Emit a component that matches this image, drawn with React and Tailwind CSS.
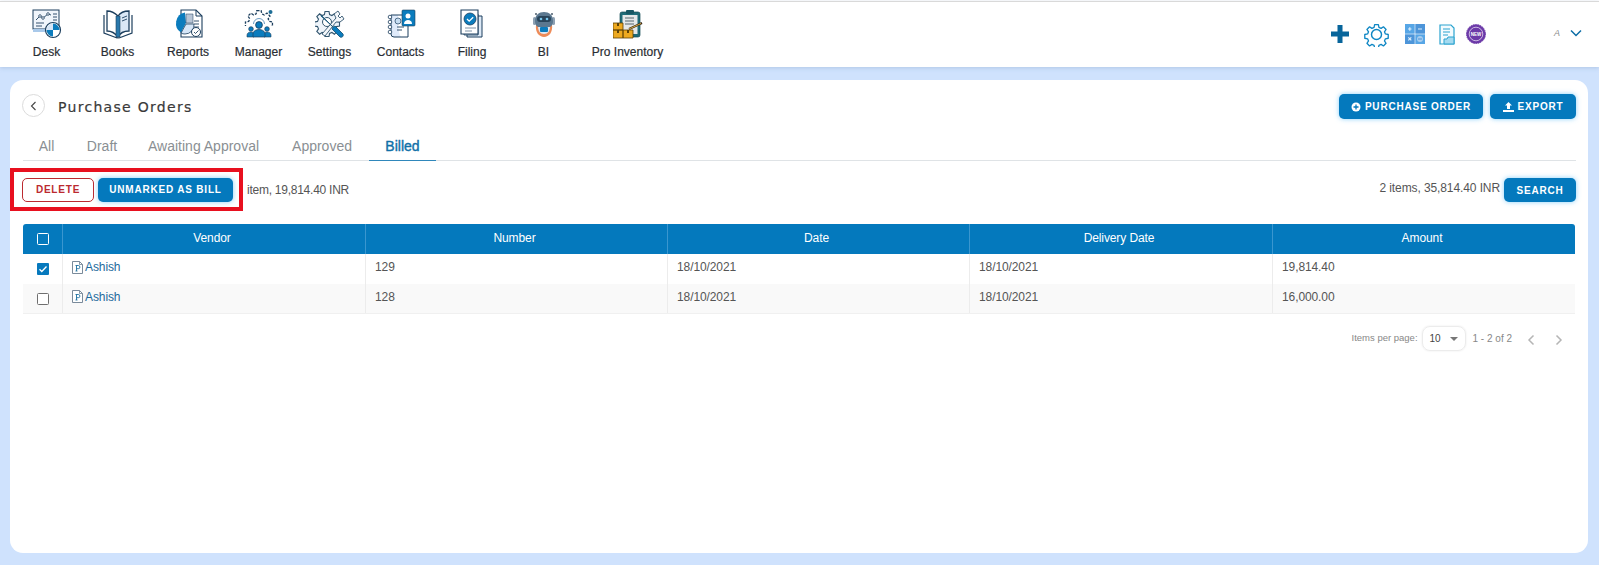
import React from "react";

const N = "#1d3f5e";
const B = "#0b7cbd";
const L = "#d6e6f7";
const GEAR =
  "M10 1.500h4l.6 3 2.300 1 2.500-1.700 2.800 2.800-1.700 2.500 1 2.300 3 .6v4l-3 .6-1 2.300 1.700 2.500-2.800 2.800-2.500-1.700-2.300 1-.6 3h-4l-.6-3-2.300-1-2.500 1.700-2.800-2.800 1.700-2.500-1-2.300-3-.6v-4l3-.6 1-2.300-1.700-2.500 2.800-2.800 2.500 1.700 2.300-1z";

function Desk() {
  return (
    <svg width="30" height="30" viewBox="0 0 30 30" fill="none">
      <rect x="1" y="1" width="26" height="19" fill="#f0f5fb" stroke={N} strokeWidth="1" />
      <path d="M1 20h16v3H1z" fill="#a9c9ea" />
      <path d="M4 11l4-4 3 2 5-4 3 1" stroke={N} strokeWidth="0.9" />
      <circle cx="8" cy="7" r="1.300" fill="#fff" stroke={N} strokeWidth="0.8" />
      <circle cx="11" cy="9" r="1.300" fill="#fff" stroke={N} strokeWidth="0.8" />
      <circle cx="16" cy="5" r="1.300" fill="#fff" stroke={N} strokeWidth="0.8" />
      <path d="M21 5h4M21 8h4M21 11h4M4 14h8M4 17h6" stroke={N} strokeWidth="0.9" />
      <circle cx="21" cy="21" r="7.500" fill="#fff" stroke={N} strokeWidth="1.200" />
      <path d="M21 14.500a6.500 6.500 0 0 1 6.500 6.500H21zM21 21v6.500a6.500 6.500 0 0 1-6.500-6.500z" fill={B} />
      <path d="M21 14.500a6.500 6.500 0 0 0-6.500 6.500H21z" fill={L} />
    </svg>
  );
}
function Books() {
  return (
    <svg width="30" height="30" viewBox="0 0 30 30" fill="none">
      <path d="M15 7C12 4 8 2 4 2v20c4 0 8 2 11 6z" fill="#fff" stroke={N} strokeWidth="1.300" />
      <path d="M1 6v18l13 5V25" stroke={N} strokeWidth="1.200" />
      <path d="M15 7c2-3 6-5 11-5v20c-5 0-9 2-11 6z" fill="#dbe8f6" stroke={N} strokeWidth="1.300" />
      <path d="M29 6v18l-13 5" stroke={N} strokeWidth="1.200" />
      <path d="M13 7h4v21h-4z" fill="#2a78ab" stroke={N} strokeWidth="0.6" />
      <path d="M19 9l5-2M19 12l5-2" stroke={N} strokeWidth="0.9" />
    </svg>
  );
}
function Reports() {
  return (
    <svg width="30" height="30" viewBox="0 0 30 30" fill="none">
      <path d="M8 1h15l6 6v21H8z" fill="#fff" stroke={N} strokeWidth="1.100" />
      <path d="M23 1v6h6" stroke={N} strokeWidth="1" />
      <path d="M21 12h5M21 15h5M21 18h5" stroke={N} strokeWidth="0.9" />
      <path d="M12 3.500a11 11 0 0 0-4 20l5-9.500z" fill={B} />
      <path d="M13 5h7v9h-7z" fill="#b9c6d6" stroke={N} strokeWidth="0.5" />
      <path d="M13 15h8a9 9 0 0 1-9 10 7 7 0 0 1-4-1z" fill={L} stroke={N} strokeWidth="0.8" />
      <circle cx="23" cy="23" r="4.500" fill="#fff" stroke={N} strokeWidth="1" />
      <path d="M21 23l1.500 1.500 3-3" stroke={N} strokeWidth="0.9" />
    </svg>
  );
}
function Manager() {
  return (
    <svg width="30" height="30" viewBox="0 0 30 30" fill="none">
      <path d={GEAR} transform="translate(2 0) scale(1.080)" stroke={N} strokeWidth="1.200" strokeDasharray="2.500 1.200" fill="#fff" />
      <path d="M9.500 15a5.500 5.500 0 0 1 11 0" stroke="#6f9cc2" strokeWidth="1" />
      <circle cx="26.500" cy="3" r="2" fill="#1d6e96" />
      <rect x="0" y="17" width="30" height="13" fill="#fff" />
      <circle cx="15" cy="16" r="3.400" fill={B} stroke={N} strokeWidth="0.8" />
      <circle cx="7" cy="20" r="2.300" fill={B} stroke={N} strokeWidth="0.7" />
      <circle cx="23" cy="20" r="2.300" fill={B} stroke={N} strokeWidth="0.7" />
      <path d="M3 28v-2c0-2 2-3 4-3s3 1 3 2v3zM20 28v-3c0-1 1-2 3-2s4 1 4 3v2z" fill={B} stroke={N} strokeWidth="0.6" />
      <path d="M9 28v-3c0-3 3-4.500 6-4.500s6 1.500 6 4.500v3z" fill={B} stroke={N} strokeWidth="0.7" />
    </svg>
  );
}
function Settings() {
  return (
    <svg width="30" height="30" viewBox="0 0 30 30" fill="none">
      <path d={GEAR} transform="translate(0 1) scale(1)" fill="#eef4fa" stroke="#33566f" strokeWidth="1.100" />
      <circle cx="12" cy="13" r="4.500" fill="#fff" stroke="#33566f" strokeWidth="1" />
      <path d="M7 25L21 9l-2-4 4-3 2 3-2 2 2 2 2-2 2 3-4 3h-4L10 27z" fill="#f4f7fa" stroke="#33566f" strokeWidth="0.9" />
      <path d="M6 6l12 12 2-1 8 8c1 2-1 4-3 3l-8-8 1-2L6 7z" fill={B} stroke="#1d5878" strokeWidth="0.9" />
    </svg>
  );
}
function Contacts() {
  return (
    <svg width="30" height="30" viewBox="0 0 30 30" fill="none">
      <path d="M5 6h17v22H8a3 3 0 0 1-3-3z" fill="#dfeafa" />
      <path d="M12 6h10v22h-7c-3-4-3-16-3-22z" fill="#fff" />
      <path d="M5 6h17v22H8a3 3 0 0 1-3-3z" stroke={N} strokeWidth="1" />
      <circle cx="4" cy="8" r="1.800" fill="#fff" stroke={N} strokeWidth="0.8" />
      <circle cx="4" cy="13" r="1.800" fill="#fff" stroke={N} strokeWidth="0.8" />
      <circle cx="4" cy="18" r="1.800" fill="#fff" stroke={N} strokeWidth="0.8" />
      <circle cx="4" cy="23" r="1.800" fill="#fff" stroke={N} strokeWidth="0.8" />
      <path d="M11 18h7M11 21h5" stroke={N} strokeWidth="0.9" />
      <rect x="16" y="1" width="13" height="16" rx="1" fill={B} stroke={N} strokeWidth="0.6" />
      <circle cx="22" cy="7" r="2.500" fill="#fff" />
      <path d="M18 15c0-3 2-4 4-4s4 1 4 4z" fill="#fff" />
      <circle cx="12" cy="12" r="3" fill="#c6ddf2" stroke={N} strokeWidth="0.7" />
    </svg>
  );
}
function Filing() {
  return (
    <svg width="30" height="30" viewBox="0 0 30 30" fill="none">
      <path d="M10 7h15v21H10z" fill="#dde9f6" stroke={N} strokeWidth="1" />
      <path d="M7 5h14v21H7z" fill="#cfe0f2" stroke={N} strokeWidth="0.8" />
      <path d="M4 1h17v24H4z" fill="#fff" stroke={N} strokeWidth="1.100" />
      <circle cx="13" cy="10" r="6" fill={B} stroke={N} strokeWidth="0.8" />
      <path d="M10 10l2.200 2.200 4-4" stroke="#fff" strokeWidth="1.300" />
      <path d="M8 19h11M8 22h7" stroke="#7d91a5" strokeWidth="1" />
    </svg>
  );
}
function Bi() {
  return (
    <svg width="30" height="30" viewBox="0 0 30 30" fill="none">
      <path d="M7 16c-1 7 3 12 8 12s9-5 8-12z" fill="#ee8b58" />
      <path d="M9 17c0 5 2 8 6 8s6-3 6-8z" fill="#dfe9f4" />
      <rect x="11" y="18" width="8" height="5" rx="1" fill={B} />
      <circle cx="7" cy="5" r="1" fill="#4c5c6c" />
      <circle cx="23" cy="5" r="1" fill="#4c5c6c" />
      <rect x="4" y="8" width="3" height="8" rx="1.500" fill="#8da0b2" />
      <rect x="23" y="8" width="3" height="8" rx="1.500" fill="#8da0b2" />
      <path d="M6 12c0-6 4-9 9-9s9 3 9 9c0 3-1 5-3 6H9c-2-1-3-3-3-6z" fill="#5b7890" />
      <rect x="8" y="7" width="14" height="6" rx="3" fill="#28445a" />
      <circle cx="12" cy="10" r="1.300" fill="#79c7ee" />
      <circle cx="18" cy="10" r="1.300" fill="#79c7ee" />
    </svg>
  );
}
function Pro() {
  return (
    <svg width="30" height="30" viewBox="0 0 30 30" fill="none">
      <rect x="7" y="3" width="20" height="25" rx="2" fill="#1f6c78" stroke="#144a55" strokeWidth="0.7" />
      <rect x="13" y="1" width="8" height="4" rx="1" fill="#175663" />
      <rect x="9.500" y="6" width="15" height="19" fill="#e5e8e9" />
      <path d="M12 9h9M12 12h9M12 15h9" stroke="#56666e" strokeWidth="1.200" />
      <path d="M16 20l13-6" stroke="#3a2a16" strokeWidth="2" />
      <path d="M16 20l12-5.500" stroke="#e4b447" strokeWidth="0.9" />
      <path d="M0 14h10v7H0zM10 21h10v8H10zM0 21h10v8H0z" fill="#eda920" stroke="#5e4205" strokeWidth="0.8" />
      <path d="M4 14v3h2v-3M4 21v3h2v-3M14 21v3h2v-3" fill="#5e4205" />
    </svg>
  );
}

const navItems = [
  ["Desk", Desk, "w-[71px]"],
  ["Books", Books, "w-[71px]"],
  ["Reports", Reports, "w-[70px]"],
  ["Manager", Manager, "w-[71px]"],
  ["Settings", Settings, "w-[71px]"],
  ["Contacts", Contacts, "w-[71px]"],
  ["Filing", Filing, "w-[72px]"],
  ["BI", Bi, "w-[71px]"],
  ["Pro Inventory", Pro, "w-[97px]"],
];

function Plus2() {
  return (
    <svg width="20" height="20" viewBox="0 0 20 20">
      <path d="M7.500 1h5v6.500H19v5h-6.500V19h-5v-6.500H1v-5h6.500z" fill="#07659b" />
    </svg>
  );
}
function Gear() {
  return (
    <svg width="25" height="25" viewBox="0 0 24 24" fill="none" stroke="#0f87c4" strokeWidth="1.400" strokeLinejoin="round">
      <path d={GEAR} transform="translate(1.200 1.200) scale(.9)" />
      <circle cx="12" cy="12" r="4.800" />
    </svg>
  );
}
function Calc() {
  return (
    <svg width="20" height="20" viewBox="0 0 20 20">
      <rect x="0" y="0" width="9.700" height="9.700" fill="#57a6e6" />
      <rect x="10.300" y="0" width="9.700" height="9.700" fill="#4d95d9" />
      <rect x="0" y="10.300" width="9.700" height="9.700" fill="#4d95d9" />
      <rect x="10.300" y="10.300" width="9.700" height="9.700" fill="#57a6e6" />
      <path d="M3 5h3.500M4.800 3.200v3.500M13 5h4M3.300 13.300l3 3M6.300 13.300l-3 3" stroke="#dceefc" strokeWidth="1.200" />
      <circle cx="15" cy="15" r="3" fill="#a9cdee" />
      <path d="M13 15h4" stroke="#4d95d9" strokeWidth="1" />
    </svg>
  );
}
function Note() {
  return (
    <svg width="16" height="21" viewBox="0 0 16 21" fill="none">
      <path d="M1 1h11l3 3v16H1z" fill="#f3fbfe" stroke="#2aa3cf" strokeWidth="1.200" />
      <path d="M4 5h7M4 8h7M4 11h5" stroke="#2aa3cf" strokeWidth="1.100" />
      <path d="M5 20v-5h3l1-2h6v7z" fill="#a4daf0" stroke="#2aa3cf" strokeWidth="1" />
    </svg>
  );
}
function NewBadge() {
  return (
    <svg width="20" height="20" viewBox="0 0 20 20">
      <circle cx="10" cy="10" r="9.500" fill="#6c3aa8" stroke="#6c3aa8" strokeDasharray="1.500 0.800" />
      <circle cx="10" cy="10" r="6.800" fill="none" stroke="#e4d9f2" strokeWidth="0.800" />
      <text x="10" y="11.800" textAnchor="middle" fontSize="4.500" fontWeight="700" fill="#fff" fontFamily="Liberation Sans">NEW</text>
    </svg>
  );
}
function FileP() {
  return (
    <svg width="11" height="13" viewBox="0 0 11 13" fill="none" className="shrink-0">
      <path d="M.5.500h7l3 3v9H.500z" fill="#fff" stroke="#6b7e90" strokeWidth="0.900" />
      <path d="M7.500.500v3h3" stroke="#6b7e90" strokeWidth="0.800" />
      <path d="M3.500 4.500h2.800a1.500 1.500 0 0 1 0 3.200H4.500M4.500 4.500v5.500M3.500 10h2" stroke="#1e6f9f" strokeWidth="0.900" />
    </svg>
  );
}
function CheckBox({ checked, header }) {
  if (checked) {
    return (
      <span className="flex h-[12px] w-[12px] items-center justify-center rounded-[1px] bg-[#0679bd]">
        <svg width="10" height="10" viewBox="0 0 10 10" fill="none">
          <path d="M1.500 5.200l2.300 2.300 4.700-5" stroke="#fff" strokeWidth="1.300" />
        </svg>
      </span>
    );
  }
  return (
    <span className={`block h-[12px] w-[12px] rounded-[1.500px] border ${header ? "border-white" : "border-[#6f6f6f] bg-white"}`} />
  );
}

const btn =
  "rounded-[5px] bg-[#0479bd] font-bold text-white text-[10px] tracking-[0.8px] shadow-[0_0_5px_rgba(90,190,250,0.7)] flex items-center justify-center";

const rows = [
  ["129", "18/10/2021", "18/10/2021", "19,814.40", true, "bg-white"],
  ["128", "18/10/2021", "18/10/2021", "16,000.00", false, "bg-[#f9f9f9] border-b border-[#f0f0f0]"],
];

const grid = "grid grid-cols-[39px_303px_302px_302px_303px_303px]";

export default function App() {
  return (
    <div className="h-[565px] w-[1599px] overflow-hidden bg-[#cfe2fd] font-['Liberation_Sans',Arial,sans-serif] text-[12px]">
      <div className="bg-white pt-px">
        <header className="flex h-[66px] items-start border-t border-t-[#d9d9d9] bg-white pl-[11px] pr-[17px] shadow-[0_1px_4px_rgba(120,150,190,0.35)]">
          <nav className="flex">
            {navItems.map(([label, Icon, w]) => (
              <div key={label} className={`${w} flex flex-col items-center pt-[7px] text-[#2a2e33]`}>
                <Icon />
                <span className="mt-[6px] whitespace-nowrap text-[12px] leading-[14px] [-webkit-text-stroke:0.2px]">{label}</span>
              </div>
            ))}
          </nav>
          <div className="ml-auto flex h-[66px] items-center pb-[2px]">
            <Plus2 />
            <span className="ml-[14px]"><Gear /></span>
            <span className="ml-[16px]"><Calc /></span>
            <span className="ml-[14px]"><Note /></span>
            <span className="ml-[11px]"><NewBadge /></span>
            <span className="ml-[68px] text-[9px] italic text-[#8a8a8a]">A</span>
            <svg width="12" height="8" viewBox="0 0 12 8" fill="none" className="mb-[3px] ml-[10px]">
              <path d="M1 1.500l5 5 5-5" stroke="#0c6da6" strokeWidth="1.500" />
            </svg>
          </div>
        </header>
      </div>

      <main className="mx-[10px] mt-[13px] h-[473px] w-[1578px] rounded-[13px] bg-white pl-[13px] pr-[12px] pt-[13px]">
        <div className="flex items-start justify-between">
          <div className="-ml-[1px] flex items-start pt-[1px]">
            <span className="flex h-[23px] w-[23px] items-center justify-center rounded-full border border-[#dcdcdc]">
              <svg width="12" height="12" viewBox="0 0 12 12" fill="none">
                <path d="M7.500 2L3.500 6l4 4" stroke="#444" strokeWidth="1.100" />
              </svg>
            </span>
            <h1 className="ml-[13px] font-['DejaVu_Sans',sans-serif] text-[14px] leading-[26px] tracking-[1.300px] text-[#3a3a3a] [-webkit-text-stroke:0.2px]">Purchase Orders</h1>
          </div>
          <div className="flex gap-[7px] pt-[1px]">
            <button className={`${btn} h-[25px] w-[144px]`}>
              <svg width="10" height="10" viewBox="0 0 10 10" className="mr-[4px]">
                <circle cx="5" cy="5" r="4.500" fill="#fff" />
                <path d="M5 2.500v5M2.500 5h5" stroke="#0479bd" strokeWidth="1.300" />
              </svg>
              PURCHASE ORDER
            </button>
            <button className={`${btn} h-[25px] w-[86px]`}>
              <svg width="11" height="10" viewBox="0 0 11 10" className="mr-[4px]">
                <path d="M5.500 0l3.500 3.500H7V7H4V3.500H2zM0 8h11v2H0z" fill="#fff" />
              </svg>
              EXPORT
            </button>
          </div>
        </div>

        <div className="mt-[11px] flex h-[30px] w-[1553px] border-b border-[#dfe3e6] text-[14px] text-[#8a8f93]">
          <span className="flex w-[47px] justify-center pt-[7px] leading-[16px]">All</span>
          <span className="ml-[8px] flex w-[48px] justify-center pt-[7px] leading-[16px]">Draft</span>
          <span className="ml-[22px] pt-[7px] leading-[16px]">Awaiting Approval</span>
          <span className="ml-[33px] pt-[7px] leading-[16px]">Approved</span>
          <span className="ml-[17px] flex h-[30px] w-[67px] justify-center border-b border-[#2f87bb] pt-[7px] leading-[16px] text-[#1070a8] [-webkit-text-stroke:0.4px]">Billed</span>
        </div>

        <div className="mt-[7px] flex items-start justify-between">
          <div className="flex items-center">
            <div className="-ml-[13px] flex h-[43px] w-[233px] items-center gap-[4px] border-[4px] border-[#e8101f] pl-[8px]">
              <button className="flex h-[24px] w-[72px] items-center justify-center rounded-[5px] border border-[#bb2a30] bg-white text-[10px] font-bold tracking-[0.8px] text-[#bb2a2f]">DELETE</button>
              <button className={`${btn} h-[24px] w-[135px]`}>UNMARKED AS BILL</button>
            </div>
            <span className="ml-[4px] text-[12px] tracking-[-0.25px] text-[#555]">item, 19,814.40 INR</span>
          </div>
          <div className="flex items-center pt-[10px]">
            <span className="mb-[4px] text-[12px] tracking-[-0.1px] text-[#555]">2 items, 35,814.40 INR</span>
            <button className={`${btn} ml-[4px] h-[24px] w-[72px]`}>SEARCH</button>
          </div>
        </div>

        <div className="mt-[13px] w-[1552px]">
          <div className={`${grid} h-[30px] rounded-t-[3px] bg-[#0479bd] text-[12px] tracking-[-0.1px] text-white`}>
            <div className="flex items-center justify-center"><CheckBox header /></div>
            {["Vendor", "Number", "Date", "Delivery Date", "Amount"].map((h) => (
              <div key={h} className="flex items-center justify-center border-l border-[#3a96cf] pb-[3px] pr-[4px]">{h}</div>
            ))}
          </div>
          {rows.map(([num, d1, d2, amt, chk, bg]) => (
            <div key={num} className={`${grid} h-[30px] text-[12px] tracking-[-0.1px] text-[#555] ${bg}`}>
              <div className="flex items-center justify-center"><CheckBox checked={chk} /></div>
              <div className="flex items-center border-l border-[#ececec] pb-[4px] pl-[9px] text-[#1c6a9c]"><FileP /><span className="ml-[2px]">Ashish</span></div>
              {[num, d1, d2, amt].map((v, i) => (
                <div key={i} className="flex items-center border-l border-[#ececec] pb-[4px] pl-[9px]">{v}</div>
              ))}
            </div>
          ))}
        </div>

        <div className="mt-[12px] flex w-[1552px] items-center justify-end pr-[11px] text-[#888]">
          <span className="text-[9.500px]">Items per page:</span>
          <span className="ml-[4px] flex h-[25px] w-[44px] items-center justify-between rounded-[8px] border border-[#ececec] pl-[7px] pr-[7px] text-[10px] text-[#444] shadow-[0_0_2px_rgba(0,0,0,0.1)]">
            10
            <svg width="8" height="4" viewBox="0 0 8 4"><path d="M0 0h8L4 4z" fill="#777" /></svg>
          </span>
          <span className="ml-[7px] text-[10px]">1 - 2 of 2</span>
          <svg width="10" height="12" viewBox="0 0 10 12" fill="none" className="ml-[14px] mt-[2px]"><path d="M7.500 1.500L3 6l4.500 4.500" stroke="#b5b5b5" strokeWidth="1.500" /></svg>
          <svg width="10" height="12" viewBox="0 0 10 12" fill="none" className="ml-[18px] mt-[2px]"><path d="M2.500 1.500L7 6l-4.500 4.500" stroke="#b5b5b5" strokeWidth="1.500" /></svg>
        </div>
      </main>
    </div>
  );
}
